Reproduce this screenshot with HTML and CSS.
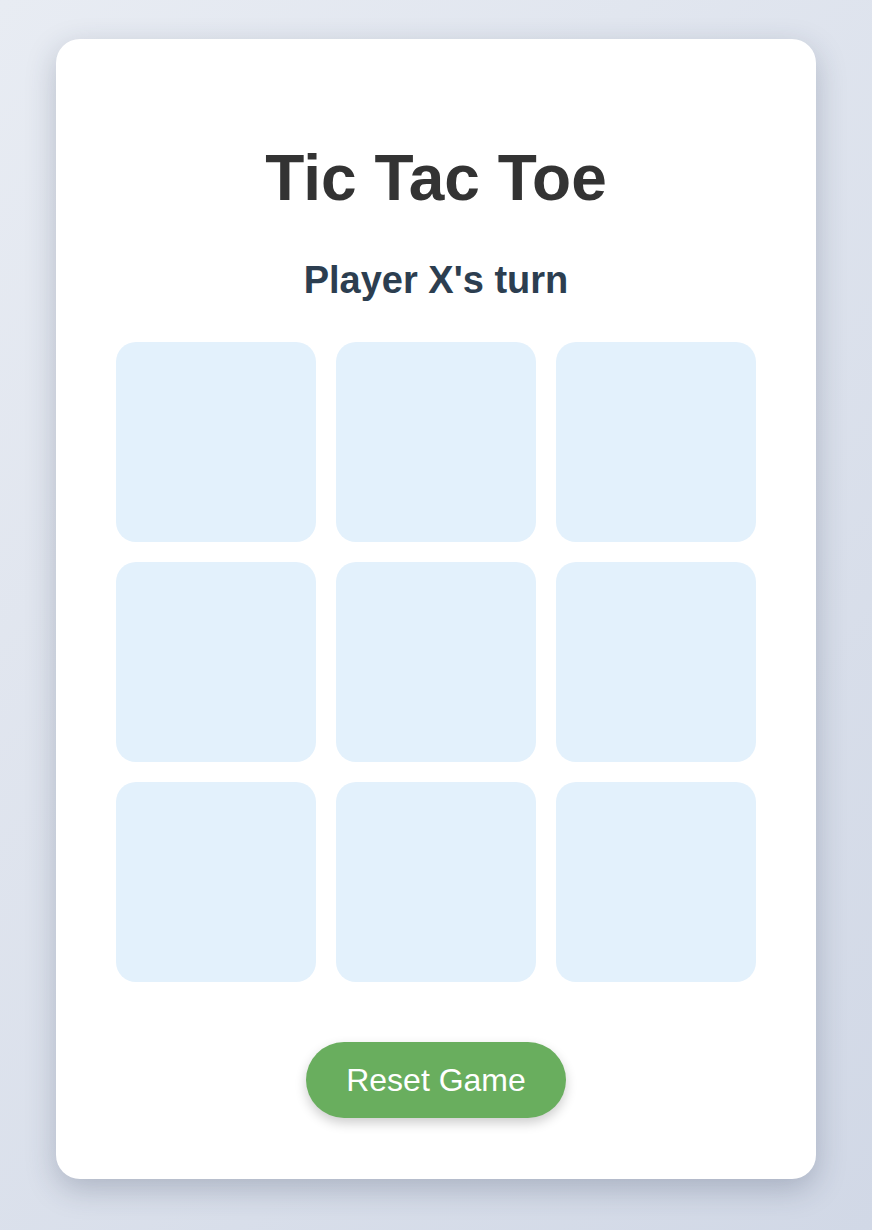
FILE: index.html
```html
<!DOCTYPE html>
<html lang="en">
<head>
<meta charset="UTF-8">
<title>Tic Tac Toe</title>
<link rel="stylesheet" href="styles.css">
</head>
<body>
  <main class="card">
    <h1 class="title">Tic Tac Toe</h1>
    <p class="status">Player X's turn</p>
    <div class="board">
      <button class="cell"></button>
      <button class="cell"></button>
      <button class="cell"></button>
      <button class="cell"></button>
      <button class="cell"></button>
      <button class="cell"></button>
      <button class="cell"></button>
      <button class="cell"></button>
      <button class="cell"></button>
    </div>
    <div class="actions">
      <button class="reset">Reset Game</button>
    </div>
  </main>
</body>
</html>
```

FILE: styles.css
```css
html, body {
  margin: 0;
  padding: 0;
}
body {
  min-height: 1230px;
  box-sizing: border-box;
  padding-top: 39px;
  background: linear-gradient(135deg, #e8ecf3 0%, #d1d8e6 100%);
  font-family: "Liberation Sans", Arial, sans-serif;
  display: flex;
  justify-content: center;
  align-items: flex-start;
}
.card {
  width: 760px;
  box-sizing: border-box;
  background: #ffffff;
  border-radius: 24px;
  padding: 60px 60px 61px;
  box-shadow: 0 10px 30px rgba(40, 50, 80, 0.25);
  text-align: center;
}
.title {
  font-size: 64px;
  font-weight: 700;
  color: #333333;
  margin: 43px 0 0;
  line-height: 73px;
}
.status {
  font-size: 38px;
  font-weight: 700;
  color: #2c3e50;
  margin: 44px 0 0;
  line-height: 43px;
}
.board {
  display: grid;
  grid-template-columns: repeat(3, 200px);
  grid-auto-rows: 200px;
  gap: 20px;
  margin-top: 40px;
}
.cell {
  border: none;
  border-radius: 20px;
  background: #e3f1fc;
  padding: 0;
  margin: 0;
}
.actions {
  margin-top: 60px;
  display: flex;
  justify-content: center;
}
.reset {
  width: 260px;
  height: 76px;
  border: none;
  border-radius: 38px;
  background: #69ae5e;
  color: #ffffff;
  font-family: "Liberation Sans", Arial, sans-serif;
  font-size: 32px;
  box-shadow: 0 5px 12px rgba(0, 0, 0, 0.2);
  padding: 0;
}
```
